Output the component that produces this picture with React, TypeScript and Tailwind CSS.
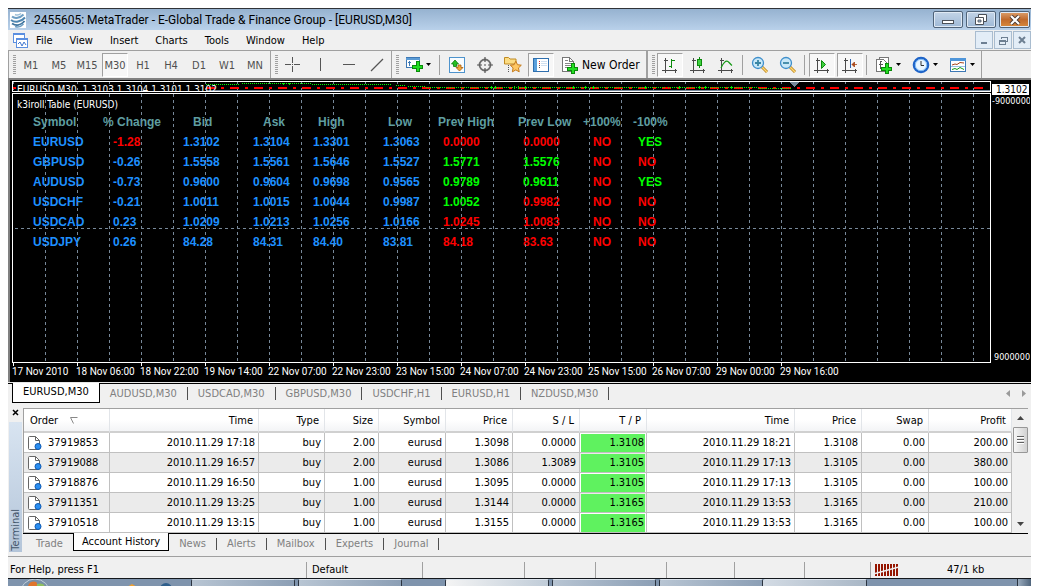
import React from "react";

const ui = "font-['DejaVu_Sans_Condensed','Noto_Sans',sans-serif]";

type IconProps = { children: React.ReactNode; crisp?: boolean };

function Icon({ children, crisp = true }: IconProps) {
  return (
    <svg
      viewBox="0 0 18 18"
      className="size-[18px] shrink-0"
      fill="none"
      shapeRendering={crisp ? "crispEdges" : "auto"}
      aria-hidden="true"
    >
      {children}
    </svg>
  );
}

function Plus({ x = 7, y = 7 }: { x?: number; y?: number }) {
  return (
    <path
      transform={`translate(${x} ${y})`}
      d="M4 .5h3v3.500h3.500v3H7v3.500H4V7H.5V4H4z"
      fill="#22dd22"
      stroke="#0a8a0a"
      strokeWidth="1"
    />
  );
}

const Page = (
  <>
    <path d="M1.500 1.500h7l4 4v10h-11z" fill="#fff" stroke="#777" />
    <path d="M8.500 1.500v4h4" stroke="#777" />
  </>
);

const Axes = (
  <path
    d="M4.500 2v15M1 14.500h15M2.500 4.500h4M14.500 12.500v4"
    stroke="#4a4a4a"
    shapeRendering="crispEdges"
  />
);

const icons = {
  cross: (
    <Icon>
      <path d="M1 8.500h6M10 8.500h6M8.500 1v6M8.500 10v6M8 8.500h1" stroke="#555" />
    </Icon>
  ),
  vline: (
    <Icon>
      <path d="M8.500 2v13" stroke="#555" />
    </Icon>
  ),
  hline: (
    <Icon>
      <path d="M3 8.500h12" stroke="#555" />
    </Icon>
  ),
  trend: (
    <Icon crisp={false}>
      <path d="M3 15L15 3" stroke="#555" strokeWidth="1.200" />
    </Icon>
  ),
  newChart: (
    <Icon>
      <rect x="1.500" y="1.500" width="13" height="10" fill="#fff" stroke="#3d78b5" />
      <path d="M1 2h14v2H1z" fill="#5b9bd5" />
      <path d="M4.500 5v5M3 6.500h3" stroke="#3d78b5" />
      <Plus x={7} y={5} />
    </Icon>
  ),
  market: (
    <Icon crisp={false}>
      <rect x="1.500" y="1.500" width="15" height="15" fill="#f8fcff" stroke="#4e93cc" />
      <path d="M3.500 8L7 4l3.500 4H8.500v2.500h-3V8z" fill="#25c025" stroke="#0d7d0d" strokeWidth=".8" />
      <path d="M8 11.500h2V9h3v2.500h2L11.500 15z" fill="#f3a83c" stroke="#a65c0b" strokeWidth=".8" />
    </Icon>
  ),
  target: (
    <Icon crisp={false}>
      <circle cx="9" cy="9" r="5.500" stroke="#6e6e6e" strokeWidth="1.800" />
      <path d="M9 1v5M9 12v5M1 9h5M12 9h5" stroke="#555" strokeWidth="1.200" />
      <path d="M8 9h2M9 8v2" stroke="#555" strokeWidth=".6" />
    </Icon>
  ),
  favorites: (
    <Icon crisp={false}>
      <path d="M.5 8V1.500h4l1.500 1.500h6v5z" fill="#fbdc84" stroke="#c08a22" />
      <path d="M4.500 9v7" stroke="#555" strokeDasharray="1 1" />
      <path
        d="M11.800 5.200l1.700 3.500 3.800.5-2.800 2.700.7 3.900-3.400-1.900-3.400 1.900.7-3.900-2.800-2.700 3.800-.5z"
        fill="#ffc864"
        stroke="#c47a1c"
      />
    </Icon>
  ),
  navigator: (
    <Icon>
      <rect x="1.500" y="2.500" width="15" height="13" fill="#fff" stroke="#2f6fae" />
      <path d="M2 3h3v12H2z" fill="#5aa0dc" />
      <path d="M7 5.500h1M7 7.500h1" stroke="#d33" />
      <path d="M7 9.500h1M7 11.500h1" stroke="#555" />
      <path d="M9 5.500h6M9 7.500h6M9 9.500h6" stroke="#cfe0f0" />
    </Icon>
  ),
  order: (
    <Icon>
      {Page}
      <path d="M4 4.500h3M4 7.500h6M4 9.500h6M4 11.500h4" stroke="#888" />
      <Plus x={6} y={7} />
    </Icon>
  ),
  bars: (
    <Icon>
      {Axes}
      <path d="M10.500 3v9M8 10.500h2M11 4.500h3" stroke="#0c8a0c" />
    </Icon>
  ),
  candles: (
    <Icon>
      {Axes}
      <path d="M10.500 1v11" stroke="#0c8a0c" />
      <rect x="8.500" y="3.500" width="4" height="6" fill="#3fd03f" stroke="#0c8a0c" />
    </Icon>
  ),
  line: (
    <Icon crisp={false}>
      {Axes}
      <path d="M4 12c2-5 5-8 7-6.500 1.500 1 2 2.500 4 4" stroke="#159a15" strokeWidth="1.200" />
    </Icon>
  ),
  zoomIn: (
    <Icon crisp={false}>
      <path d="M11 11l5 5" stroke="#b98018" strokeWidth="3" />
      <path d="M11 11l5 5" stroke="#ffd872" strokeWidth="1.500" />
      <circle cx="7" cy="7" r="5.500" fill="#c9e8f8" stroke="#3f8fcb" strokeWidth="1.300" />
      <path d="M4 7h6M7 4v6" stroke="#3a86a4" strokeWidth="1.800" />
    </Icon>
  ),
  zoomOut: (
    <Icon crisp={false}>
      <path d="M11 11l5 5" stroke="#b98018" strokeWidth="3" />
      <path d="M11 11l5 5" stroke="#ffd872" strokeWidth="1.500" />
      <circle cx="7" cy="7" r="5.500" fill="#c9e8f8" stroke="#3f8fcb" strokeWidth="1.300" />
      <path d="M4 7h6" stroke="#3a86a4" strokeWidth="1.800" />
    </Icon>
  ),
  scroll: (
    <Icon crisp={false}>
      {Axes}
      <path d="M8.500 4.500l4 4-4 4z" fill="#3fd03f" stroke="#0c8a0c" />
    </Icon>
  ),
  shift: (
    <Icon crisp={false}>
      {Axes}
      <path d="M9.500 3v9" stroke="#2c62b0" />
      <path d="M11 8.500h5M13.500 6l-2.500 2.500L13.500 11z" stroke="#a8481a" fill="#a8481a" strokeWidth=".8" />
    </Icon>
  ),
  indicators: (
    <Icon>
      <path d="M4.500 1.500h9v11h-9z" fill="#fff" stroke="#777" />
      <path d="M1.500 3.500h7l3 3v9h-10z" fill="#fff" stroke="#777" />
      <path d="M6.500 5.500h-1.500v7M3.500 8.500h4" stroke="#555" />
      <Plus x={6} y={7} />
    </Icon>
  ),
  clock: (
    <Icon crisp={false}>
      <circle cx="9" cy="9" r="7.200" fill="#e9f5ff" stroke="#1f64c8" strokeWidth="2.200" />
      <circle cx="9" cy="9" r="5.700" stroke="#7ab8f5" />
      <path d="M9 5v4.500h3" stroke="#333" />
    </Icon>
  ),
  template: (
    <Icon crisp={false}>
      <rect x="1.500" y="2.500" width="15" height="13" fill="#fff" stroke="#3d78b5" />
      <path d="M1 2h16v3H1z" fill="#4f96da" />
      <path d="M3 9l3-1 2 .5 3-2 4 .5" stroke="#a5451c" />
      <path d="M2 10.500h14" stroke="#9cc3e4" />
      <path d="M3 13.500l3-1 2 1 3-2 2 1 2 1" stroke="#159a15" />
    </Icon>
  ),
};

const pressed =
  "border border-[#a0a0a0] border-r-white border-b-white bg-[#f7f7f7]";

function Tool({
  label,
  active,
  children,
}: {
  label: string;
  active?: boolean;
  children: React.ReactNode;
}) {
  return (
    <div className="flex w-7 shrink-0 justify-center">
      <button
        type="button"
        aria-label={label}
        aria-pressed={active ? true : undefined}
        className={`flex h-6 w-[26px] items-center justify-center ${active ? pressed : ""}`}
      >
        {children}
      </button>
    </div>
  );
}

function DropTool({ label, children }: { label: string; children: React.ReactNode }) {
  return (
    <button
      type="button"
      aria-label={label}
      className="flex h-6 w-[37px] shrink-0 items-center gap-[3px] pl-[5px]"
    >
      {children}
      <svg viewBox="0 0 5 3" className="h-[3px] w-[5px]" aria-hidden="true">
        <path d="M0 0h5L2.500 3z" fill="#000" />
      </svg>
    </button>
  );
}

function Grip() {
  return (
    <span className="mr-px h-5 w-[3px] shrink-0 bg-[repeating-linear-gradient(to_bottom,#a0a0a0_0_1px,transparent_1px_2px)]" />
  );
}

function Sep() {
  return <span className="mx-[2px] h-5 w-[2px] shrink-0 border-l border-[#a0a0a0]" />;
}

const periods = ["M1", "M5", "M15", "M30", "H1", "H4", "D1", "W1", "MN"];

function Toolbar() {
  return (
    <div
      role="toolbar"
      aria-label="Main"
      className="flex h-7 shrink-0 items-stretch overflow-hidden border-t border-l border-[#a0a0a0] bg-[#f0f0f0]"
    >
      <div className="flex items-center border-r border-[#a0a0a0] pr-px pl-1">
        <Grip />
        {periods.map((p) => (
          <div key={p} className="flex w-7 justify-center">
            <button
              type="button"
              aria-pressed={p === "M30"}
              className={`${ui} h-6 w-[26px] pt-[3px] text-[11px] leading-4 text-[#505050] ${p === "M30" ? pressed : ""}`}
            >
              {p}
            </button>
          </div>
        ))}
      </div>
      <div className="flex items-center border-r border-[#a0a0a0] pl-1">
        <Grip />
        <Tool label="Crosshair">{icons.cross}</Tool>
        <Tool label="Vertical line">{icons.vline}</Tool>
        <Tool label="Horizontal line">{icons.hline}</Tool>
        <Tool label="Trendline">{icons.trend}</Tool>
      </div>
      <div className="flex items-center border-r-2 border-[#a0a0a0] pl-1">
        <Grip />
        <DropTool label="New chart">{icons.newChart}</DropTool>
        <Sep />
        <Tool label="Market watch">{icons.market}</Tool>
        <Tool label="Data window">{icons.target}</Tool>
        <Tool label="Favorites">{icons.favorites}</Tool>
        <Tool label="Navigator" active>
          {icons.navigator}
        </Tool>
        <button
          type="button"
          className={`${ui} flex h-6 w-[91px] items-center gap-[3px] pl-[6px] text-[12px] leading-4 whitespace-nowrap text-black`}
        >
          {icons.order}
          <span className="pt-px">New Order</span>
        </button>
      </div>
      <div className="flex items-center border-r border-[#a0a0a0] pl-1">
        <Grip />
        <Tool label="Bar chart" active>
          {icons.bars}
        </Tool>
        <Tool label="Candlesticks">{icons.candles}</Tool>
        <Tool label="Line chart">{icons.line}</Tool>
        <Sep />
        <Tool label="Zoom in">{icons.zoomIn}</Tool>
        <Tool label="Zoom out">{icons.zoomOut}</Tool>
        <Sep />
        <Tool label="Auto scroll" active>
          {icons.scroll}
        </Tool>
        <Tool label="Chart shift" active>
          {icons.shift}
        </Tool>
        <Sep />
        <DropTool label="Indicators">{icons.indicators}</DropTool>
        <DropTool label="Periods">{icons.clock}</DropTool>
        <DropTool label="Templates">{icons.template}</DropTool>
      </div>
    </div>
  );
}

function AppLogo() {
  return (
    <svg viewBox="0 0 16 16" className="size-4 bg-white" fill="none" aria-hidden="true">
      <path d="M2 4.500C5 7 10 6 13.500 2.500" stroke="#6f9fc4" strokeWidth="2" />
      <path d="M5 2.500c2 1 4 .8 6-1" stroke="#9fc0d8" strokeWidth="1.500" />
      <path d="M1 8c4 3 10 2 14-2.500" stroke="#4f86b0" strokeWidth="2" />
      <path d="M2 11.500c4 2.500 9 2 12.500-2.500" stroke="#3f749e" strokeWidth="2" />
      <path d="M5 14.500c3 1 6 .3 8.500-2.500" stroke="#6f9fc4" strokeWidth="1.500" />
    </svg>
  );
}

function TitleBar() {
  const frame =
    "flex h-[17px] items-center justify-center rounded-[2px] border border-[#4f6379] shadow-[inset_0_0_0_1px_#dfe9f4]";
  return (
    <header className="flex h-[22px] shrink-0 items-center border-t border-[#303338] bg-linear-to-b from-[#96b2d0] to-[#b9d1ea] pr-px pl-[2px]">
      <AppLogo />
      <h1 className="ml-2 flex-1 truncate font-[Roboto,'Noto_Sans',sans-serif] text-[12px] leading-5 text-black">
        2455605: MetaTrader - E-Global Trade &amp; Finance Group - [EURUSD,M30]
      </h1>
      <div className="flex gap-[3px]">
        <button type="button" aria-label="Minimize" className={`${frame} w-[30px] bg-linear-to-b from-[#c3d4e7] to-[#9fb9d6]`}>
          <svg viewBox="0 0 12 6" className="mt-1 h-[6px] w-3" aria-hidden="true">
            <rect x=".5" y="1.500" width="11" height="3" fill="#fff" stroke="#4a4f57" />
          </svg>
        </button>
        <button type="button" aria-label="Restore" className={`${frame} w-[30px] bg-linear-to-b from-[#c3d4e7] to-[#9fb9d6]`}>
          <svg viewBox="0 0 12 11" className="h-[11px] w-3" aria-hidden="true">
            <path d="M3.500 .5h8v7h-8z" fill="#fff" stroke="#4a4f57" />
            <path d="M.5 3.500h8v7h-8z" fill="#fff" stroke="#4a4f57" />
            <path d="M3 6h3v2H3z" fill="#9fb9d6" stroke="#4a4f57" strokeWidth=".8" />
          </svg>
        </button>
        <button type="button" aria-label="Close" className={`${frame} w-[31px] bg-linear-to-b from-[#dca06c] via-[#c06a2c] to-[#d98a3c]`}>
          <svg viewBox="0 0 12 10" className="h-[10px] w-3" aria-hidden="true">
            <path d="M2 1l8 8M10 1L2 9" stroke="#4a3a34" strokeWidth="4" />
            <path d="M2 1l8 8M10 1L2 9" stroke="#fff" strokeWidth="2.200" />
          </svg>
        </button>
      </div>
    </header>
  );
}

const menus = ["File", "View", "Insert", "Charts", "Tools", "Window", "Help"];

function MenuBar() {
  const child =
    "flex size-[18px] items-center justify-center border border-[#a9bccf] bg-[#e3edf7] text-[#6d7f92]";
  return (
    <nav className="flex h-5 shrink-0 items-center bg-[#f0f0f0] pl-1">
      <svg viewBox="0 0 16 16" className="size-4" fill="none" shapeRendering="crispEdges" aria-hidden="true">
        <rect x="1.500" y="1.500" width="11" height="9" fill="#fff" stroke="#5b8fe0" />
        <path d="M1 1h12v2H1z" fill="#5b8fe0" />
        <rect x="4.500" y="6.500" width="11" height="9" fill="#fff" stroke="#5b8fe0" />
        <path d="M4 6h12v2H4z" fill="#5b8fe0" />
        <path d="M6 12l2-2 2 4 2-4 2 3" stroke="#3f76cf" shapeRendering="auto" />
      </svg>
      <div className="flex flex-1 gap-[17px] pt-px pl-2">
        {menus.map((m) => (
          <button key={m} type="button" className={`${ui} text-[11px] leading-4 text-black`}>
            {m}
          </button>
        ))}
      </div>
      <div className="flex gap-px">
        <button type="button" aria-label="Minimize chart" className={child}>
          <span className="mt-[6px] h-[2px] w-[6px] bg-[#6d7f92]" />
        </button>
        <button type="button" aria-label="Restore chart" className={child}>
          <svg viewBox="0 0 9 9" className="size-[9px]" fill="none" shapeRendering="crispEdges" aria-hidden="true">
            <path d="M2.500 3V1h6v4H7M2 1.500h7" stroke="currentColor" />
            <path d="M.5 4.500h6v4h-6zM0 5h7" stroke="currentColor" />
          </svg>
        </button>
        <button type="button" aria-label="Close chart" className={child}>
          <svg viewBox="0 0 8 8" className="size-2" aria-hidden="true">
            <path d="M1 1l6 6M7 1L1 7" stroke="currentColor" strokeWidth="2" />
          </svg>
        </button>
      </div>
    </nav>
  );
}

const columns = [
  { title: "Symbol", col: "w-[70px]", head: "", cell: "" },
  { title: "% Change", col: "w-[80px]", head: "", cell: "pl-[10px]" },
  { title: "Bid", col: "w-[70px]", head: "pl-[10px]", cell: "" },
  { title: "Ask", col: "w-[60px]", head: "pl-[10px]", cell: "" },
  { title: "High", col: "w-[70px]", head: "pl-[5px]", cell: "" },
  { title: "Low", col: "w-[55px]", head: "pl-[5px]", cell: "" },
  { title: "Prev High", col: "w-[80px]", head: "", cell: "pl-[5px]" },
  { title: "Prev Low", col: "w-[65px]", head: "", cell: "pl-[5px]" },
  { title: "+100%", col: "w-[50px]", head: "", cell: "pl-[10px]" },
  { title: "-100%", col: "w-[50px]", head: "", cell: "pl-[5px]" },
];

const B = "text-[#1e90ff]";
const R = "text-[#ff0000]";
const G = "text-[#00ff00]";

const quotes: [string, string][][] = [
  [["EURUSD", B], ["-1.28", R], ["1.3102", B], ["1.3104", B], ["1.3301", B], ["1.3063", B], ["0.0000", R], ["0.0000", R], ["NO", R], ["YES", G]],
  [["GBPUSD", B], ["-0.26", B], ["1.5558", B], ["1.5561", B], ["1.5646", B], ["1.5527", B], ["1.5771", G], ["1.5576", G], ["NO", R], ["NO", R]],
  [["AUDUSD", B], ["-0.73", B], ["0.9600", B], ["0.9604", B], ["0.9698", B], ["0.9565", B], ["0.9789", G], ["0.9611", G], ["NO", R], ["YES", G]],
  [["USDCHF", B], ["-0.21", B], ["1.0011", B], ["1.0015", B], ["1.0044", B], ["0.9987", B], ["1.0052", G], ["0.9982", R], ["NO", R], ["NO", R]],
  [["USDCAD", B], ["0.23", B], ["1.0209", B], ["1.0213", B], ["1.0256", B], ["1.0166", B], ["1.0245", R], ["1.0083", R], ["NO", R], ["NO", R]],
  [["USDJPY", B], ["0.26", B], ["84.28", B], ["84.31", B], ["84.40", B], ["83.81", B], ["84.18", R], ["83.63", R], ["NO", R], ["NO", R]],
];

const times = [
  "17 Nov 2010", "18 Nov 06:00", "18 Nov 22:00", "19 Nov 14:00", "22 Nov 07:00",
  "22 Nov 23:00", "23 Nov 15:00", "24 Nov 07:00", "24 Nov 23:00", "25 Nov 15:00",
  "26 Nov 07:00", "29 Nov 00:00", "29 Nov 16:00",
];

function PriceStrip() {
  return (
    <svg className="absolute inset-0 size-full" fill="none" shapeRendering="crispEdges" aria-hidden="true">
      <defs>
        <pattern id="stripGrid" width="32" height="6" patternUnits="userSpaceOnUse">
          <path d="M0.500 0v2" stroke="#778899" />
        </pattern>
      </defs>
      <rect width="100%" height="100%" fill="url(#stripGrid)" />
      <path d="M0 6h3M193 6h780" stroke="#ff0000" strokeWidth="2" strokeDasharray="9 6 3 6" />
      <path
        d="M193 2.500h34M229 1.500h70M299 2.500h80M383 3.500h10M395 4.500h18M413 5.500h240M655 5.500h90M745 6.500h34"
        stroke="#00ff00"
        strokeDasharray="1 1"
      />
      <path
        d="M270.500 1v2M276.500 1v2M478.500 4v3M482.500 4v3M501.500 4v3M505.500 4v3M512.500 4v3M560.500 4v3M572.500 4v3M580.500 4v3M632.500 4v3M666.500 4v3M686.500 4v3M692.500 4v3M718.500 4v3"
        stroke="#00dd00"
        strokeWidth="1"
      />
      <path d="M193 8.500h787" stroke="#778899" />
      <path d="M776 0h10l-5 5z" fill="#778899" />
    </svg>
  );
}

function GridLines() {
  return (
    <svg className="pointer-events-none absolute inset-0 size-full" fill="none" shapeRendering="crispEdges" aria-hidden="true">
      <defs>
        <pattern id="grid" width="32" height="6" patternUnits="userSpaceOnUse">
          <path d="M0.500 0v3" stroke="#778899" />
        </pattern>
      </defs>
      <rect x="1" width="100%" height="100%" fill="url(#grid)" />
      <line x1="2" x2="100%" y1="134.500" y2="134.500" stroke="#778899" strokeDasharray="3 3" />
    </svg>
  );
}

function Chart() {
  return (
    <main className="flex min-h-[303px] flex-1 border-t-2 border-l-2 border-[#808080] bg-black pt-px pr-px pb-[2px] pl-[2px]">
      <div className="flex min-w-0 flex-1 flex-col">
        <section className="relative mb-px h-[11px] shrink-0 overflow-hidden border border-white bg-black">
          <PriceStrip />
          <div className={`${ui} relative -mt-[9px] ml-1 w-max text-[10px] leading-[11px] whitespace-pre text-white`}>
            <p className="pl-[2px]"># Standard k3k7</p>
            <p>EURUSD,M30  1.3103 1.3104 1.3101 1.3102</p>
          </div>
        </section>
        <section className="relative flex-1 border border-white">
          <h2 className={`${ui} pt-1 pl-1 text-[10px] leading-[14px] text-white`}>k3iroll Table (EURUSD)</h2>
          <table className="ml-5 w-[650px] table-fixed border-collapse text-left font-['Liberation_Sans',Arial,sans-serif] text-[12px] leading-5 font-bold">
            <thead>
              <tr>
                {columns.map((c) => (
                  <th key={c.title} scope="col" className={`${c.col} ${c.head} p-0 whitespace-nowrap text-[#5f9ea0]`}>
                    {c.title}
                  </th>
                ))}
              </tr>
            </thead>
            <tbody>
              {quotes.map((row) => (
                <tr key={row[0][0]}>
                  {row.map(([text, tone], i) => (
                    <td key={columns[i].title} className={`${columns[i].cell} ${tone} py-0`}>
                      {text}
                    </td>
                  ))}
                </tr>
              ))}
            </tbody>
          </table>
          <GridLines />
        </section>
        <div className="flex h-[17px] shrink-0 overflow-hidden font-[Roboto,'Noto_Sans',sans-serif] text-[10px] text-white">
          {times.map((t) => (
            <div key={t} className="relative w-16 shrink-0 pt-[2px] leading-[14px] whitespace-nowrap">
              <span className="absolute top-0 left-px h-[3px] w-px bg-white" />
              {t}
            </div>
          ))}
        </div>
      </div>
      <aside className={`${ui} flex w-[39px] shrink-0 flex-col overflow-hidden pt-[3px] pb-[17px] pl-px text-[9px] leading-[11px] text-white`}>
        <span className="mr-px bg-white pl-1 text-[10px] text-black">1.3102</span>
        <span className="mt-px">-9000000</span>
        <span className="mt-auto pl-[2px]">9000000</span>
      </aside>
    </main>
  );
}

const chartTabs = ["EURUSD,M30", "AUDUSD,M30", "USDCAD,M30", "GBPUSD,M30", "USDCHF,H1", "EURUSD,H1", "NZDUSD,M30"];

function ChartTabs() {
  return (
    <div className="h-[25px] shrink-0 border-t border-[#e8e8e8] bg-[#f0f0f0]">
      <div role="tablist" className={`${ui} flex h-5 items-start border-t border-black pl-1 text-[11px]`}>
        {chartTabs.map((t, i) => (
          <button
            key={t}
            type="button"
            role="tab"
            aria-selected={i === 0}
            className={
              i === 0
                ? "-mt-px h-5 border-x border-b border-black bg-white px-[10px] text-black"
                : "mt-[3px] h-[13px] border-r border-[#505050] px-[10px] leading-[13px] text-[#808080]"
            }
          >
            {t}
          </button>
        ))}
        <span className="ml-auto flex gap-3 pt-[6px] pr-[5px]">
          <button type="button" aria-label="Scroll tabs left" className="block">
            <svg viewBox="0 0 4 7" className="h-[7px] w-1" aria-hidden="true">
              <path d="M4 0v7L0 3.500z" fill="#9a9a9a" />
            </svg>
          </button>
          <button type="button" aria-label="Scroll tabs right" className="block">
            <svg viewBox="0 0 4 7" className="h-[7px] w-1" aria-hidden="true">
              <path d="M0 0v7L4 3.500z" fill="#9a9a9a" />
            </svg>
          </button>
        </span>
      </div>
    </div>
  );
}

const heads = [
  ["Order", "w-[86px]"],
  ["Time", "w-[149px]"],
  ["Type", "w-[66px]"],
  ["Size", "w-[54px]"],
  ["Symbol", "w-[67px]"],
  ["Price", "w-[67px]"],
  ["S / L", "w-[67px]"],
  ["T / P", "w-[67px]"],
  ["Time", "w-[148px]"],
  ["Price", "w-[67px]"],
  ["Swap", "w-[67px]"],
  ["Profit", ""],
];

const orders = [
  ["37919853", "2010.11.29 17:18", "buy", "2.00", "eurusd", "1.3098", "0.0000", "1.3108", "2010.11.29 18:21", "1.3108", "0.00", "200.00"],
  ["37919088", "2010.11.29 16:57", "buy", "2.00", "eurusd", "1.3086", "1.3089", "1.3105", "2010.11.29 17:13", "1.3105", "0.00", "380.00"],
  ["37918876", "2010.11.29 16:50", "buy", "1.00", "eurusd", "1.3095", "0.0000", "1.3105", "2010.11.29 17:13", "1.3105", "0.00", "100.00"],
  ["37911351", "2010.11.29 13:25", "buy", "1.00", "eurusd", "1.3144", "0.0000", "1.3165", "2010.11.29 13:53", "1.3165", "0.00", "210.00"],
  ["37910518", "2010.11.29 13:15", "buy", "1.00", "eurusd", "1.3155", "0.0000", "1.3165", "2010.11.29 13:53", "1.3165", "0.00", "100.00"],
];

function OrderIcon() {
  return (
    <svg viewBox="0 0 15 16" className="h-4 w-[15px]" fill="none" aria-hidden="true">
      <path d="M1.500 2.500a1 1 0 0 1 1-1h6l4 4v8a1 1 0 0 1-1 1h-9a1 1 0 0 1-1-1z" fill="#fff" stroke="#666" />
      <path d="M8.500 1.500v4h4" stroke="#666" />
      <circle cx="11" cy="11.500" r="3" fill="#2a8ef0" stroke="#0b57b0" />
    </svg>
  );
}

function History() {
  return (
    <table className={`${ui} w-full flex-1 table-fixed border-separate border-spacing-0 self-start text-right text-[11px] text-black`}>
      <thead>
        <tr>
          {heads.map(([title, width], i) => (
            <th
              key={i}
              scope="col"
              className={`${width} h-6 border-r border-b-2 border-r-[#e2e5e9] border-b-[#d0d0d0] bg-linear-to-b from-white from-50% to-[#f3f4f6] px-0 pt-[2px] pb-0 font-normal ${i === 0 ? "pl-[6px] text-left" : "pr-[5px]"}`}
            >
              {title}
              {i === 0 && (
                <svg viewBox="0 0 8 7" className="ml-3 inline h-[7px] w-2" fill="none" aria-hidden="true">
                  <path d="M7.500 .5H.5l3 6" stroke="#888" />
                </svg>
              )}
            </th>
          ))}
        </tr>
      </thead>
      <tbody>
        {orders.map((o, r) => (
          <tr key={o[0]} className={r % 2 ? "bg-[#ebebeb]" : "bg-white"}>
            {o.map((v, i) => (
              <td key={i} className="h-5 border-r border-b border-[#c0c0c0] p-0 leading-[18px]">
                {i === 0 ? (
                  <span className="flex items-center gap-[6px] pl-[3px]">
                    <OrderIcon />
                    <span className="pt-px">{v}</span>
                  </span>
                ) : i === 7 ? (
                  <span className="mr-px ml-px block bg-[#5ff25f] pr-px">{v}</span>
                ) : (
                  <span className="block pt-px pr-[3px]">{v}</span>
                )}
              </td>
            ))}
          </tr>
        ))}
      </tbody>
    </table>
  );
}

const panes = ["Trade", "Account History", "News", "Alerts", "Mailbox", "Experts", "Journal"];

function Terminal() {
  return (
    <section className="flex shrink-0 bg-[#f0f0f0] pt-px pr-[3px] pb-1 pl-px" aria-label="Terminal">
      <div className="flex w-[13px] shrink-0 flex-col items-center mr-px">
        <button type="button" aria-label="Close terminal" className="mb-[5px] flex h-[9px] items-center">
          <svg viewBox="0 0 7 7" className="size-[7px]" aria-hidden="true">
            <path d="M1 1l5 5M6 1L1 6" stroke="#000" strokeWidth="1.500" />
          </svg>
        </button>
        <div className="flex w-[13px] flex-1 items-end justify-center bg-linear-to-b from-[#d8e4f1] to-[#b4c5d9] pb-px">
          <span className={`${ui} rotate-180 text-[11px] leading-[13px] text-[#44566b] [writing-mode:vertical-rl]`}>
            Terminal
          </span>
        </div>
      </div>
      <div className="min-w-0 flex-1">
        <div className="flex border-t border-l border-[#a0a0a0] bg-white">
          <History />
          <div className="flex w-4 shrink-0 flex-col items-center bg-[#f0f0f0]">
            <button type="button" aria-label="Scroll up" className="flex h-[18px] items-center">
              <svg viewBox="0 0 7 4" className="h-1 w-[7px]" aria-hidden="true">
                <path d="M0 4h7L3.500 0z" fill="#444" />
              </svg>
            </button>
            <div className="flex h-[26px] w-[15px] flex-col items-center justify-center gap-px rounded-[1px] border border-[#979797] bg-linear-to-r from-[#f6f6f6] to-[#d2d2d2]">
              <span className="h-[2px] w-[7px] border-b border-white bg-[#606060]" />
              <span className="h-[2px] w-[7px] border-b border-white bg-[#606060]" />
              <span className="h-[2px] w-[7px] border-b border-white bg-[#606060]" />
            </div>
            <button type="button" aria-label="Scroll down" className="mt-auto flex h-[18px] items-center">
              <svg viewBox="0 0 7 4" className="h-1 w-[7px]" aria-hidden="true">
                <path d="M0 0h7L3.500 4z" fill="#444" />
              </svg>
            </button>
          </div>
        </div>
        <div role="tablist" className={`${ui} flex h-[19px] border-t border-black pl-[3px] text-[11px]`}>
          {panes.map((p, i) => (
            <button
              key={p}
              type="button"
              role="tab"
              aria-selected={i === 1}
              className={
                i === 1
                  ? "-mt-px h-[18px] border-x border-b border-black bg-white px-2 pt-px text-black"
                  : `mt-[4px] h-3 px-[10px] leading-3 text-[#808080] ${i === 0 ? "" : "border-r border-[#505050]"}`
              }
            >
              {p}
            </button>
          ))}
        </div>
      </div>
    </section>
  );
}

const statusCells = ["w-[102px]", "w-[71px]", "w-[71px]", "w-[68px]", "w-[70px]", "w-[66px]"];

function StatusBar() {
  return (
    <footer className={`${ui} flex h-[22px] shrink-0 items-center border-t border-[#a0a0a0] bg-[#f0f0f0] pt-1 text-[11px] leading-4 text-black`}>
      <span className="flex-1 truncate pl-[2px]">For Help, press F1</span>
      <span className="h-4 w-[116px] border-l border-[#a0a0a0] pl-[5px]">Default</span>
      {statusCells.map((w, i) => (
        <span key={i} className={`${w} h-4 border-l border-[#a0a0a0]`} />
      ))}
      <span className="flex h-4 w-[161px] items-center border-l border-[#a0a0a0] pl-1">
        <svg viewBox="0 0 24 12" className="h-3 w-6" shapeRendering="crispEdges" aria-hidden="true">
          <path d="M0 0h2v12H0zM3 0h2v12H3zM6 0h2v12H6zM9 0h2v12H9zM12 0h2v12h-2zM15 0h2v12h-2zM18 0h2v12h-2zM21 0h2v12h-2z" fill="#951500" />
          <path d="M0 9.500L24 3" stroke="#f0f0f0" strokeWidth="1.500" shapeRendering="auto" />
        </svg>
        <span className="ml-12">47/1 kb</span>
      </span>
    </footer>
  );
}

function Taskbar() {
  const task =
    "h-2 w-[104px] rounded-t-[2px] border-x border-t border-[#2b3440] border-t-[#dde5ee] bg-linear-to-r";
  return (
    <div className="flex h-2 shrink-0 items-start overflow-hidden border-t border-[#14181d] bg-[#7f94ad]">
      <svg viewBox="0 0 32 8" className="ml-[11px] h-2 w-8" aria-hidden="true">
        <circle cx="16" cy="15" r="15" fill="#7890a8" stroke="#c3d0dc" />
        <path d="M9 8c0-6 9-7 9-3v3z" fill="#e0752c" />
        <path d="M18 8V5c3-1 7-1 8 3z" fill="#8fc060" />
      </svg>
      <svg viewBox="0 0 50 8" className="ml-[72px] h-2 w-[50px]" aria-hidden="true">
        <path d="M4 8l5-3 5 3z" fill="#f0a030" />
        <circle cx="43" cy="10" r="6" fill="#2f5f8c" />
      </svg>
      <span className={`${task} ml-[18px] from-[#b8c5d3] to-[#8c9fb5]`} />
      <span className={`${task} ml-[3px] from-[#b8c5d3] to-[#8c9fb5]`} />
      <span className={`${task} ml-[43px] from-[#f4f4f4] to-[#c0ccd8]`} />
      <span className={`${task} ml-[3px] from-[#b8c5d3] to-[#8c9fb5]`} />
      <span className={`${task} ml-[3px] from-[#b8c5d3] to-[#8c9fb5]`} />
      <span className={`${task} border-l-0 from-[#d3dbe4] to-[#a9b7c6]`} />
      <span className="ml-auto h-2 w-[14px] border-l border-[#2b3440] bg-linear-to-r from-[#9aabbd] to-[#50657c]" />
    </div>
  );
}

export default function App() {
  return (
    <div className="flex min-h-screen flex-col bg-white pt-2 pr-[9px] pl-2">
      <TitleBar />
      <MenuBar />
      <Toolbar />
      <Chart />
      <ChartTabs />
      <Terminal />
      <StatusBar />
      <Taskbar />
    </div>
  );
}
